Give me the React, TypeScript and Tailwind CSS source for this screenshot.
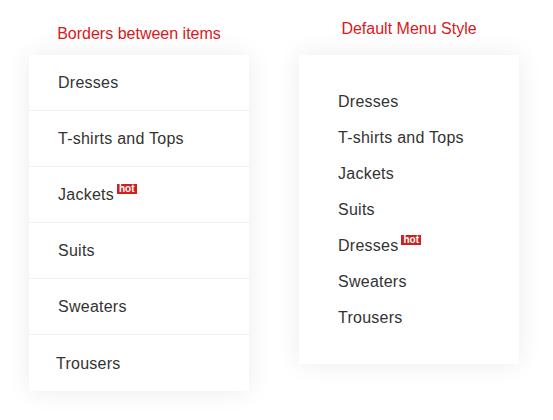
const leftItems = ['Dresses', 'T-shirts and Tops', 'Jackets', 'Suits', 'Sweaters', 'Trousers'];
const rightItems = ['Dresses', 'T-shirts and Tops', 'Jackets', 'Suits', 'Dresses', 'Sweaters', 'Trousers'];

function Hot() {
  return (
    <span className="relative -top-[6px] ml-[3px] inline-block bg-[#d0201c] px-[2px] text-[10px] font-bold leading-[10px] tracking-normal text-white">
      hot
    </span>
  );
}

export default function App() {
  return (
    <div className="flex h-[420px] w-[553px] gap-[50px] bg-white pl-[29px] font-['Liberation_Sans',Arial,sans-serif] text-[#333]">
      <div className="flex w-[220px] flex-col">
        <h3 className="pt-[24px] pb-[12px] text-center text-[16px] leading-[19px] text-[#d9191c]">
          Borders between items
        </h3>
        <ul className="bg-white shadow-[0_0_24px_rgba(0,0,0,0.08)]">
          {leftItems.map((item, i) => (
            <li
              key={item}
              className={`flex h-[56px] items-center pt-[1px] text-[16px] tracking-[0.25px] ${i < leftItems.length - 1 ? 'border-b border-[#f0f0f0] pl-[29px]' : 'pl-[27px]'}`}
            >
              <span>{item}</span>
              {i === 2 && <Hot />}
            </li>
          ))}
        </ul>
      </div>

      <div className="flex w-[220px] flex-col">
        <h3 className="pt-[19px] pb-[17px] text-center text-[16px] leading-[19px] text-[#d9191c]">
          Default Menu Style
        </h3>
        <ul className="bg-white pt-[29px] pb-[28px] pl-[39px] shadow-[0_0_24px_rgba(0,0,0,0.08)]">
          {rightItems.map((item, i) => (
            <li key={i} className="flex h-[36px] items-center text-[16px] tracking-[0.25px]">
              <span>{item}</span>
              {i === 4 && <Hot />}
            </li>
          ))}
        </ul>
      </div>
    </div>
  );
}
